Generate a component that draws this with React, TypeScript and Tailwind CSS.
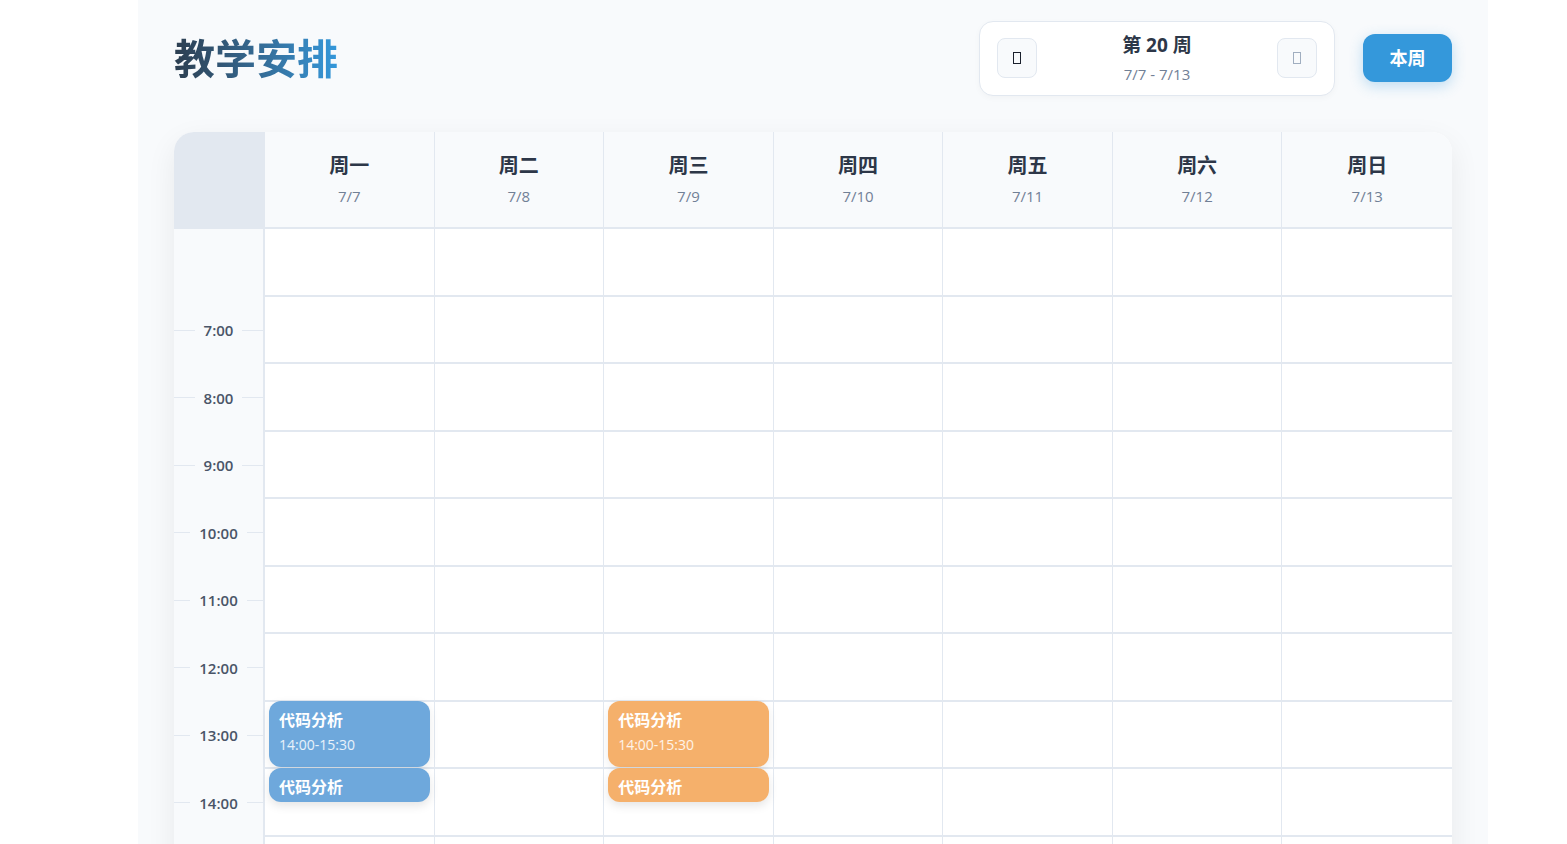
import React from "react";

const days = [
  { name: "周一", date: "7/7" },
  { name: "周二", date: "7/8" },
  { name: "周三", date: "7/9" },
  { name: "周四", date: "7/10" },
  { name: "周五", date: "7/11" },
  { name: "周六", date: "7/12" },
  { name: "周日", date: "7/13" },
];

const hours = ["", "7:00", "8:00", "9:00", "10:00", "11:00", "12:00", "13:00", "14:00", "15:00", "16:00", "17:00", "18:00", "19:00"];

type Lesson = { day: number; hour: string; color: string };

const lessons: Lesson[] = [
  { day: 0, hour: "13:00", color: "bg-[#6ea8dc]" },
  { day: 2, hour: "13:00", color: "bg-[#f5b06b]" },
];

// the font icon didn't load in the original, so the arrows show as empty boxes
function Tofu({ muted }: { muted?: boolean }) {
  return (
    <span
      className={
        "inline-block h-[12px] w-[8px] border-[1.5px] " +
        (muted ? "border-[#a0aec0]" : "border-[#1a202c]")
      }
    />
  );
}

function LessonBlocks({ color }: { color: string }) {
  return (
    <>
      <div
        className={`absolute left-1 right-1 top-[-1px] z-10 h-[66px] rounded-xl px-[10px] pt-2 text-white shadow-[0_3px_10px_rgba(0,0,0,0.08)] ${color}`}
      >
        <div className="text-[16px] font-bold leading-[22px]">代码分析</div>
        <div className="mt-[5px] text-[14px] leading-[18px] text-white/85">14:00-15:30</div>
      </div>
      <div
        className={`absolute left-1 right-1 top-[66px] z-10 h-[34px] rounded-xl px-[10px] pt-[8px] text-white shadow-[0_4px_10px_rgba(0,0,0,0.1)] ${color}`}
      >
        <div className="text-[16px] font-bold leading-[22px]">代码分析</div>
      </div>
    </>
  );
}

export default function App() {
  return (
    <div className="min-h-screen bg-white font-['Open_Sans','Noto_Sans_CJK_SC',sans-serif]">
      <div className="ml-[138px] min-h-screen w-[1350px] bg-[#f8fafc] px-9 pt-[21px]">
        {/* Header */}
        <header className="flex h-[74px] items-center justify-between">
          <h1 className="bg-linear-to-r from-[#2c3e50] to-[#3498db] bg-clip-text text-[41px] font-bold leading-[48px] text-transparent">
            教学安排
          </h1>
          <div className="flex items-center gap-7">
            <div className="flex h-[75px] w-[356px] items-center justify-between rounded-[14px] border border-[#e2e8f0] bg-white px-[17px] shadow-[0_2px_6px_rgba(0,0,0,0.03)]">
              <button className="flex h-10 w-10 items-center justify-center rounded-lg border border-[#e2e8f0] bg-[#f8fafc]">
                <Tofu />
              </button>
              <div className="flex flex-col items-center gap-[7px]">
                <div className="text-[19px] font-bold leading-6 text-[#2d3748]">第 20 周</div>
                <div className="text-[15px] leading-5 text-[#718096]">7/7 - 7/13</div>
              </div>
              <button className="flex h-10 w-10 items-center justify-center rounded-lg border border-[#e2e8f0] bg-[#f8fafc]">
                <Tofu muted />
              </button>
            </div>
            <button className="h-12 w-[89px] rounded-xl bg-[#3498db] text-lg font-bold text-white shadow-[0_4px_14px_rgba(52,152,219,0.3)]">
              本周
            </button>
          </div>
        </header>

        {/* Week grid */}
        <div className="mt-[37px] overflow-hidden rounded-t-[20px] bg-white shadow-[0_10px_30px_rgba(0,0,0,0.07)]">
          <div className="grid grid-cols-[91px_repeat(7,1fr)]">
            <div className="h-[97px] bg-[#e2e8f0]" />
            {days.map((d, i) => (
              <div
                key={d.name}
                className={
                  "flex h-[97px] flex-col items-center border-b-2 border-[#e2e8f0] bg-[#f8fafc] pt-5 " +
                  (i < 6 ? "border-r" : "")
                }
              >
                <div className="text-[20px] font-bold leading-7 text-[#2d3748]">{d.name}</div>
                <div className="mt-1.5 text-[15px] leading-5 text-[#718096]">{d.date}</div>
              </div>
            ))}

            {hours.map((h) => (
              <React.Fragment key={h || "blank"}>
                <div className="flex h-[67.5px] items-center gap-[9px] border-r-2 border-[#e2e8f0] bg-[#f8fafc]">
                  {h && (
                    <>
                      <span className="h-px flex-1 bg-[#e2e8f0]" />
                      <span className="text-[15px] font-semibold text-[#4a5568]">{h}</span>
                      <span className="h-px flex-1 bg-[#e2e8f0]" />
                    </>
                  )}
                </div>
                {days.map((d, i) => {
                  const lesson = lessons.find((l) => l.day === i && l.hour === h);
                  return (
                    <div
                      key={d.name}
                      className={
                        "relative h-[67.5px] border-b-2 border-[#e2e8f0] " + (i < 6 ? "border-r" : "")
                      }
                    >
                      {lesson && <LessonBlocks color={lesson.color} />}
                    </div>
                  );
                })}
              </React.Fragment>
            ))}
          </div>
        </div>
      </div>
    </div>
  );
}
